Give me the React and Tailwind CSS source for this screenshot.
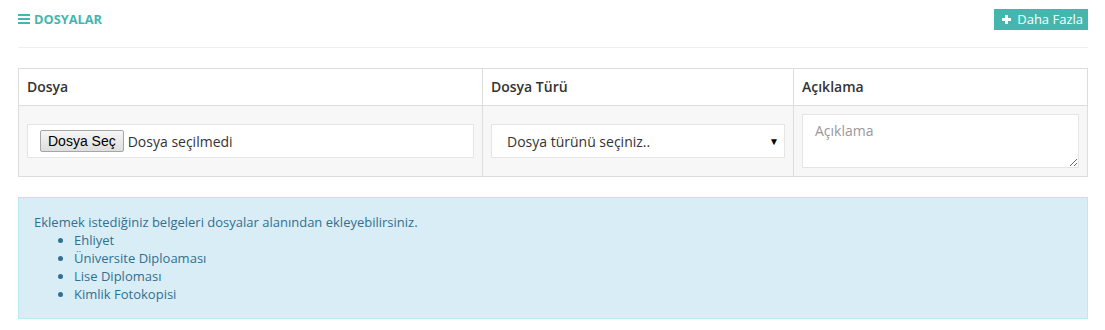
import React from 'react';

const files = ['Ehliyet', 'Üniversite Diploaması', 'Lise Diploması', 'Kimlik Fotokopisi'];

const App = () => {
  return (
    <div className="min-h-screen bg-white pl-[18px] pr-[17px] pt-[9px] font-['Open_Sans',sans-serif] text-[#333]">
      {/* Title bar */}
      <div className="flex items-center justify-between h-[21px]">
        <div className="flex items-center gap-[4px] text-[#44b6ae]">
          <svg width="12" height="10" viewBox="0 0 12 10" className="fill-current">
            <rect x="0" y="0" width="12" height="2" />
            <rect x="0" y="4" width="12" height="2" />
            <rect x="0" y="8" width="12" height="2" />
          </svg>
          <span className="text-[12.8px] font-bold uppercase leading-none">Dosyalar</span>
        </div>
        <button className="flex items-center gap-[6px] h-[21px] pl-[8px] pr-[5px] bg-[#44b6ae] text-white text-[13px] leading-none">
          <svg width="9" height="9" viewBox="0 0 9 9" className="fill-current">
            <rect x="3" y="0" width="3" height="9" />
            <rect x="0" y="3" width="9" height="3" />
          </svg>
          Daha Fazla
        </button>
      </div>

      <div className="mt-[17px] border-t border-[#eee]" />

      {/* Files table */}
      <table className="mt-[20px] w-full border-collapse border border-[#ddd] text-[14px]">
        <thead>
          <tr className="bg-white">
            <th className="w-[464px] border border-[#ddd] p-[8px] text-left font-semibold leading-[20px]">Dosya</th>
            <th className="w-[311px] border border-[#ddd] p-[8px] text-left font-semibold leading-[20px]">Dosya Türü</th>
            <th className="border border-[#ddd] p-[8px] text-left font-semibold leading-[20px]">Açıklama</th>
          </tr>
        </thead>
        <tbody>
          <tr className="bg-[#f7f7f7]">
            <td className="border border-[#ddd] p-[8px] align-middle">
              <div className="flex items-center h-[34px] bg-white border border-[#e5e5e5] pl-[12px]">
                <span className="flex items-center h-[22px] px-[7px] border border-[#a6a6a6] rounded-[2px] bg-gradient-to-b from-[#f6f6f6] to-[#dedede] text-[14px] text-black font-['Liberation_Sans',sans-serif]">
                  Dosya Seç
                </span>
                <span className="ml-[4px] text-[14px] text-[#333]">Dosya seçilmedi</span>
              </div>
            </td>
            <td className="border border-[#ddd] p-[8px] align-middle">
              <div className="flex items-center justify-between h-[34px] bg-white border border-[#e5e5e5] pl-[15px] pr-[5px]">
                <span className="text-[14px] text-[#333]">Dosya türünü seçiniz..</span>
                <span className="text-[10px] text-black leading-none">▼</span>
              </div>
            </td>
            <td className="border border-[#ddd] p-[8px] align-middle">
              <textarea
                placeholder="Açıklama"
                className="block w-full h-[54px] bg-white border border-[#e5e5e5] px-[12px] py-[6px] text-[14px] leading-[20px] placeholder:text-[#999] outline-none"
              />
            </td>
          </tr>
        </tbody>
      </table>

      {/* Info box */}
      <div className="mt-[20px] bg-[#d9edf7] border border-[#bce8f1] text-[#31708f] text-[13px] leading-[18px] px-[15px] py-[15px]">
        <p>Eklemek istediğiniz belgeleri dosyalar alanından ekleyebilirsiniz.</p>
        <ul className="list-disc pl-[40px]">
          {files.map(f => (
            <li key={f}>{f}</li>
          ))}
        </ul>
      </div>
    </div>
  );
};

export default App;
